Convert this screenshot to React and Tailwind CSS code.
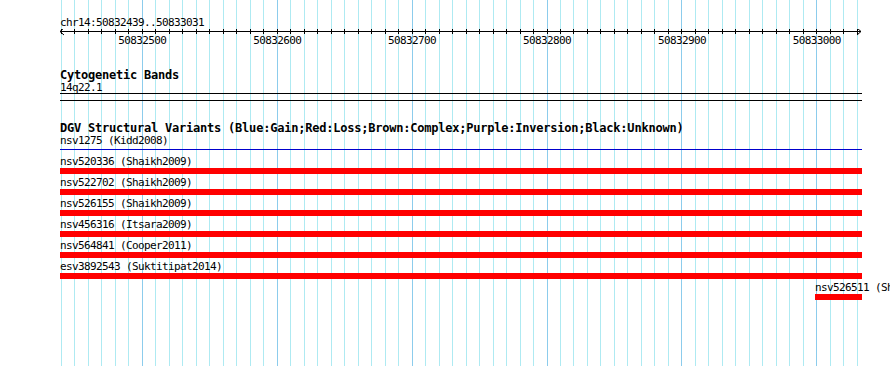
import React from 'react';

const START = 50832439;
const END = 50833031;
const SCALE = 800 / (END - START + 1);
const px = (bp) => 60 + (bp - START) * SCALE;

const gridLines = [];
for (let bp = 50832440; bp <= 50833030; bp += 10) {
  gridLines.push({ bp, x: Math.floor(px(bp)) + 0.5, major: bp % 100 === 0 });
}

const variants = [
  { name: 'nsv520336 (Shaikh2009)' },
  { name: 'nsv522702 (Shaikh2009)' },
  { name: 'nsv526155 (Shaikh2009)' },
  { name: 'nsv456316 (Itsara2009)' },
  { name: 'nsv564841 (Cooper2011)' },
  { name: 'esv3892543 (Suktitipat2014)' },
];

const mono = "font-['DejaVu_Sans_Mono','Liberation_Mono',monospace]";

function Grid() {
  return (
    <svg className="absolute inset-0" width="890" height="366">
      {gridLines.map((g) => (
        <line
          key={g.bp}
          x1={g.x}
          x2={g.x}
          y1="0"
          y2="366"
          stroke={g.major ? '#8cccec' : '#aeeaf2'}
          strokeWidth="1"
          shapeRendering="crispEdges"
        />
      ))}
    </svg>
  );
}

function Ruler() {
  // svg origin sits at page x=0, y=29
  return (
    <svg width="890" height="19" className="block">
      <line x1="60" x2="861" y1="2.5" y2="2.5" stroke="#000" shapeRendering="crispEdges" />
      {gridLines.map((g) => (
        <line key={g.bp} x1={g.x} x2={g.x} y1="0" y2="5" stroke="#000" shapeRendering="crispEdges" />
      ))}
      <polyline points="64,-1 60,2.5 64,6" fill="none" stroke="#000" strokeWidth="1" />
      <polyline points="857,-1 861,2.5 857,6" fill="none" stroke="#000" strokeWidth="1" />
      {gridLines
        .filter((g) => g.major)
        .map((g) => (
          <text
            key={g.bp}
            x={px(g.bp)}
            y="15"
            textAnchor="middle"
            fontFamily="DejaVu Sans Mono, Liberation Mono, monospace"
            fontSize="11"
            letterSpacing="-0.62"
            fill="#000"
          >
            {g.bp}
          </text>
        ))}
    </svg>
  );
}

function Label({ children }) {
  return (
    <div className="h-[12px] leading-[12px] text-[11px] tracking-[-0.62px] whitespace-nowrap text-black">
      {children}
    </div>
  );
}

function Title({ children }) {
  return (
    <div className="h-[13px] leading-[13px] text-[12px] font-bold tracking-[-0.22px] whitespace-nowrap text-black">
      {children}
    </div>
  );
}

export default function App() {
  return (
    <div className={`relative w-[890px] h-[366px] overflow-hidden bg-white ${mono}`}>
      <Grid />
      <div className="relative flex flex-col">
        <div className="pt-[16px] pl-[60px] h-[29px] leading-[13px] text-[11px] tracking-[-0.62px] whitespace-nowrap">
          chr14:50832439..50833031
        </div>
        <Ruler />

        <div className="pl-[60px] mt-[21px] flex flex-col">
          <Title>Cytogenetic Bands</Title>
          <div className="h-[11px] leading-[11px] text-[11px] tracking-[-0.62px] whitespace-nowrap">14q22.1</div>
          <div className="w-[802px] h-[8px] border-y border-black" />

          <div className="mt-[21px]">
            <Title>DGV Structural Variants (Blue:Gain;Red:Loss;Brown:Complex;Purple:Inversion;Black:Unknown)</Title>
          </div>
          <Label>nsv1275 (Kidd2008)</Label>
          <div className="mt-[2px] w-[802px] h-[1px] bg-[#0000cd]" />

          <div className="mt-[6px] flex flex-col gap-[3px]">
            {variants.map((v) => (
              <div key={v.name} className="flex flex-col">
                <Label>{v.name}</Label>
                <div className="w-[802px] h-[6px] bg-[#ff0000]" />
              </div>
            ))}
            <div className="ml-[755px] flex flex-col">
              <Label>nsv526511 (Shaikh2009)</Label>
              <div className="w-[47px] h-[6px] bg-[#ff0000]" />
            </div>
          </div>
        </div>
      </div>
    </div>
  );
}
